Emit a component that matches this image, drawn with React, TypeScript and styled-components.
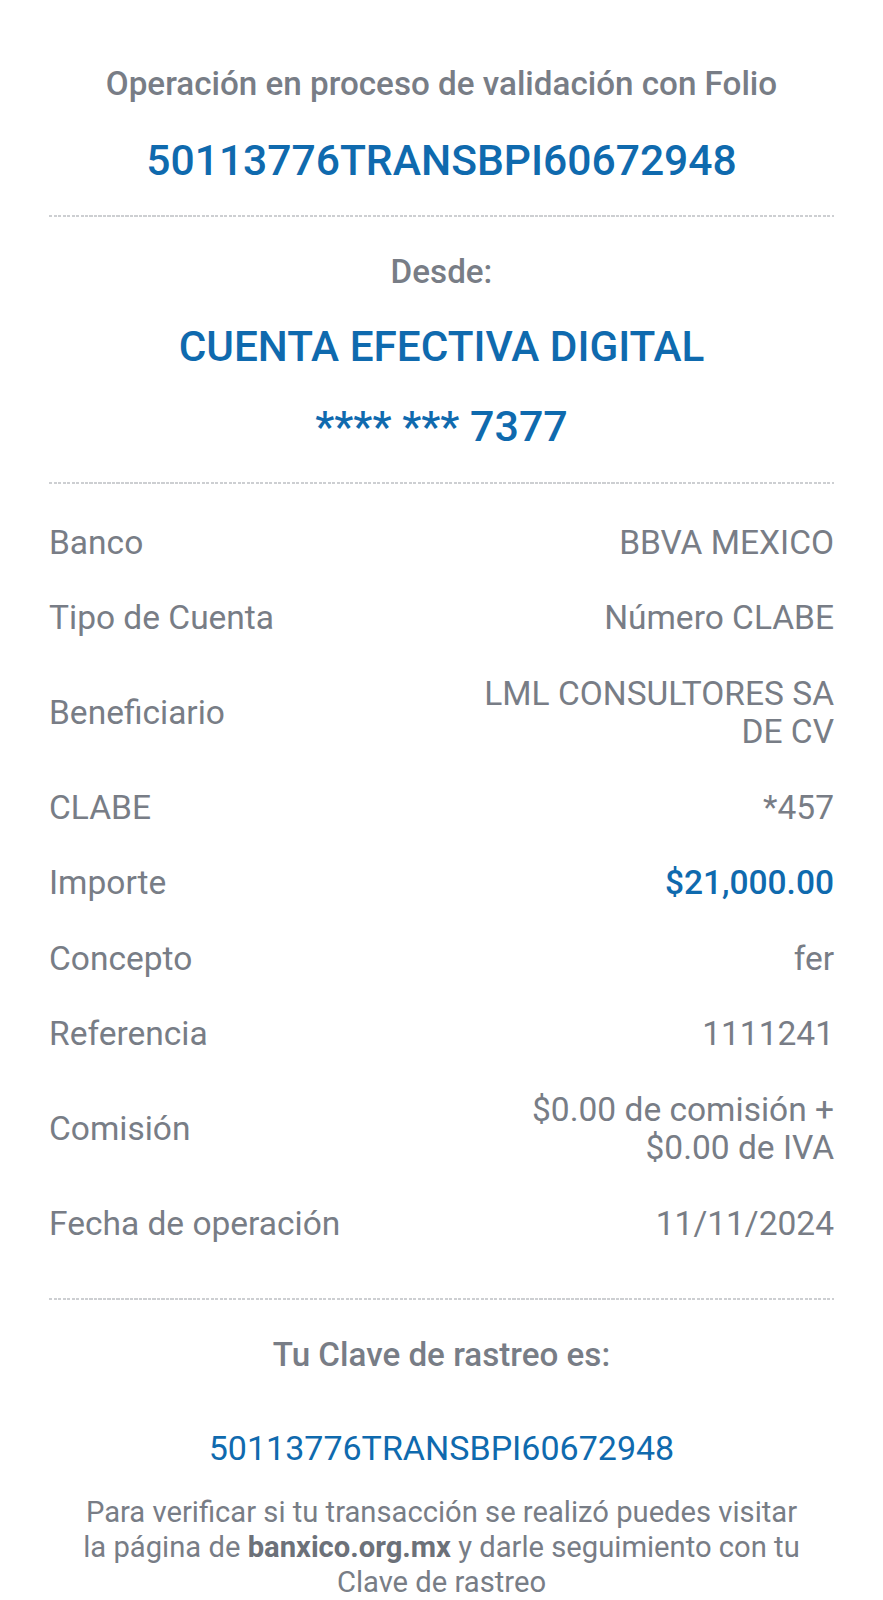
import React from "react";
import styled, { createGlobalStyle } from "styled-components";

const GlobalStyle = createGlobalStyle`
  html, body {
    margin: 0;
    padding: 0;
    background: #ffffff;
  }
  body {
    font-family: Roboto, "Noto Sans", "Liberation Sans", sans-serif;
    -webkit-font-smoothing: antialiased;
  }
`;

const GRAY = "#787d86";
const BLUE = "#0f6aae";

interface Row {
  label: string;
  value: React.ReactNode;
  highlight?: boolean;
}

const rows: Row[] = [
  { label: "Banco", value: "BBVA MEXICO" },
  { label: "Tipo de Cuenta", value: "Número CLABE" },
  { label: "Beneficiario", value: <>LML CONSULTORES SA<br />DE CV</> },
  { label: "CLABE", value: "*457" },
  { label: "Importe", value: "$21,000.00", highlight: true },
  { label: "Concepto", value: "fer" },
  { label: "Referencia", value: "1111241" },
  { label: "Comisión", value: <>$0.00 de comisión +<br />$0.00 de IVA</> },
  { label: "Fecha de operación", value: "11/11/2024" },
];

export default function App() {
  return (
    <>
      <GlobalStyle />
      <Receipt>
        <Title>Operación en proceso de validación con Folio</Title>
        <Folio>50113776TRANSBPI60672948</Folio>
        <Dashes $top={27} />

        <Title $top={35}>Desde:</Title>
        <AccountName>CUENTA EFECTIVA DIGITAL</AccountName>
        <AccountNumber>**** *** 7377</AccountNumber>
        <Dashes $top={28} />

        <Details>
          {rows.map(row => (
            <DetailRow key={row.label}>
              <Label>{row.label}</Label>
              <Value $highlight={row.highlight}>{row.value}</Value>
            </DetailRow>
          ))}
        </Details>
        <Dashes $top={37} />

        <Title $top={35}>Tu Clave de rastreo es:</Title>
        <TrackingKey>50113776TRANSBPI60672948</TrackingKey>
        <Note>
          Para verificar si tu transacción se realizó puedes visitar<br />
          la página de <strong>banxico.org.mx</strong> y darle seguimiento con tu<br />
          Clave de rastreo
        </Note>
      </Receipt>
    </>
  );
}

const Receipt = styled.main`
  display: flex;
  flex-direction: column;
  padding: 64px 49px 0;
  text-align: center;
`;

const Title = styled.h2<{ $top?: number }>`
  margin: ${props => props.$top ?? 0}px 0 0;
  font-size: 33.2px;
  line-height: 40px;
  font-weight: 500;
  color: ${GRAY};
`;

const Folio = styled.div`
  margin-top: 28px;
  font-size: 42.6px;
  line-height: 56px;
  font-weight: 500;
  color: ${BLUE};
`;

const Dashes = styled.hr<{ $top: number }>`
  margin: ${props => props.$top}px 0 0;
  border: none;
  height: 2px;
  background: repeating-linear-gradient(
    to right,
    #cdcfd2 0 3px,
    transparent 3px 4.5px
  );
`;

const AccountName = styled.div`
  margin-top: 29px;
  font-size: 42.3px;
  line-height: 52px;
  font-weight: 500;
  color: ${BLUE};
`;

const AccountNumber = styled.div`
  margin-top: 25px;
  font-size: 43px;
  line-height: 56px;
  font-weight: 500;
  color: ${BLUE};
`;

const Details = styled.div`
  display: flex;
  flex-direction: column;
  margin-top: 21px;
`;

const DetailRow = styled.div`
  display: flex;
  justify-content: space-between;
  align-items: center;
  gap: 24px;
  padding: 18.8px 0;
  font-size: 33.5px;
  line-height: 38px;
`;

const Label = styled.span`
  text-align: left;
  color: ${GRAY};
`;

const Value = styled.span<{ $highlight?: boolean }>`
  text-align: right;
  color: ${props => props.$highlight ? BLUE : GRAY};
  font-weight: ${props => props.$highlight ? 500 : 400};
`;

const TrackingKey = styled.div`
  margin-top: 51px;
  font-size: 34px;
  line-height: 44px;
  color: ${BLUE};
`;

const Note = styled.p`
  margin: 25px 0 0;
  font-size: 29.2px;
  line-height: 35px;
  color: ${GRAY};

  strong {
    font-weight: 700;
    color: #6c7179;
  }
`;
